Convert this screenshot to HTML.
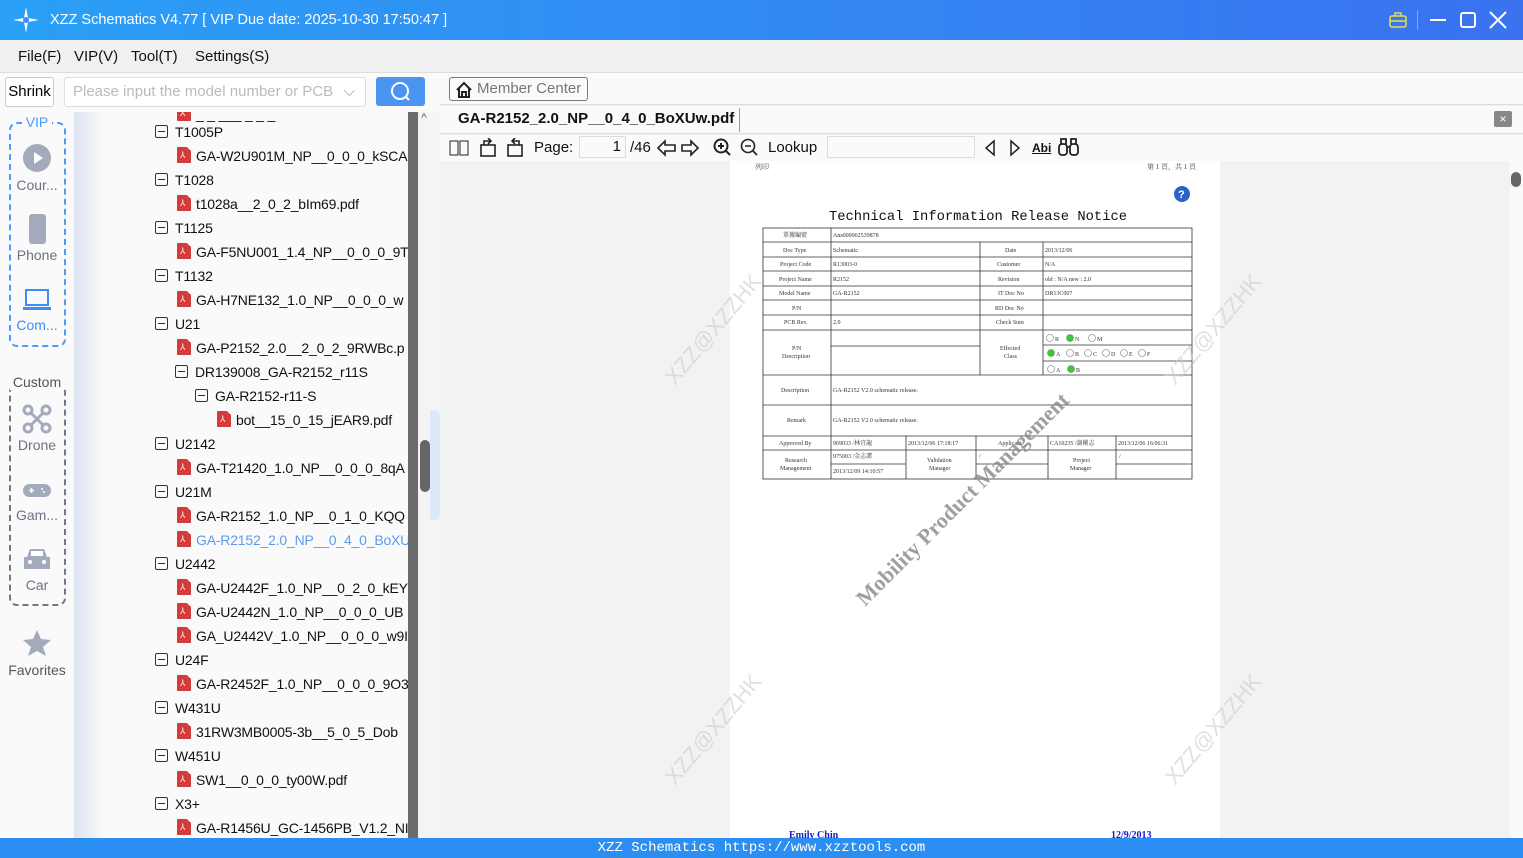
<!DOCTYPE html>
<html><head><meta charset="utf-8"><style>
*{margin:0;padding:0;box-sizing:border-box}
body{width:1523px;height:858px;overflow:hidden;position:relative;font-family:"Liberation Sans","Noto Sans CJK SC",sans-serif;background:#f0f0f0}
.a{position:absolute}
#title{left:0;top:0;width:1523px;height:40px;background:linear-gradient(90deg,#2aa0f6,#3a72f0);color:#fff;font-size:14.5px}
#menu{left:0;top:40px;width:1523px;height:32px;background:#f0f0f0;font-size:15px;color:#111}
#menu span{position:absolute;top:8px}
.tree{left:74px;top:112px;width:334px;height:726px;background:linear-gradient(90deg,#dde4f2 0,#fafafa 30px,#fafafa);overflow:hidden}
.row{position:absolute;font-size:14px;letter-spacing:-0.2px;color:#111;white-space:nowrap;height:24px;line-height:24px}
.mn{display:inline-block;width:13px;height:13px;border:1px solid #333;border-radius:2px;position:relative;vertical-align:-1px;margin-right:7px}
.mn:after{content:"";position:absolute;left:2px;right:2px;top:5px;height:1px;background:#333}
.pdf{display:inline-block;width:14px;height:16px;background:#d33a3a;vertical-align:-2px;margin-right:5px;border-radius:1px;position:relative;clip-path:polygon(0 0,70% 0,100% 25%,100% 100%,0 100%)}
.pdf:after{content:"⅄";position:absolute;color:#fff;font-size:9px;left:3px;top:3px;line-height:10px}
.side{left:0;top:112px;width:74px;height:726px;background:#fafafa}
.sl{position:absolute;width:74px;text-align:center;font-size:14px;color:#6b7280}
.tb{font-size:15px;color:#111}
</style></head><body>
<div class="a" id="title">
 <svg class="a" style="left:12px;top:6px" width="28" height="28" viewBox="0 0 28 28"><path d="M14 1 L16 12 L27 14 L16 16 L14 27 L12 16 L1 14 L12 12Z" fill="#fff"/><circle cx="14" cy="14" r="3" fill="#3a8ef5"/></svg>
 <span class="a" style="left:50px;top:12px">XZZ Schematics V4.77 [ VIP Due date: 2025-10-30 17:50:47 ]</span>
 <svg class="a" style="left:1388px;top:10px" width="20" height="20"><rect x="2" y="6" width="16" height="11" rx="2" fill="none" stroke="#e8e040" stroke-width="1.5"/><path d="M7 6V3h6v3M2 11h16" stroke="#e8e040" stroke-width="1.5" fill="none"/></svg>
 <div class="a" style="left:1417px;top:10px;width:1px;height:20px;background:#6ab0f5"></div>
 <div class="a" style="left:1430px;top:19px;width:16px;height:2px;background:#fff"></div>
 <div class="a" style="left:1460px;top:12px;width:16px;height:16px;border:2px solid #fff;border-radius:3px"></div>
 <svg class="a" style="left:1489px;top:11px" width="18" height="18"><path d="M1 1L17 17M17 1L1 17" stroke="#fff" stroke-width="2"/></svg>
</div>
<div class="a" id="menu"><span style="left:18px">File(F)</span><span style="left:74px">VIP(V)</span><span style="left:131px">Tool(T)</span><span style="left:195px">Settings(S)</span></div>
<div class="a" style="left:0;top:72px;width:1523px;height:1px;background:#ddd"></div>
<div class="a" style="left:0;top:73px;width:440px;height:39px;background:#fafafa"></div>
<div class="a" style="left:5px;top:77px;width:49px;height:30px;border:1px solid #ccc;border-radius:3px;background:#fff;font-size:15px;line-height:28px;text-align:center">Shrink</div>
<div class="a" style="left:64px;top:77px;width:302px;height:30px;border:1px solid #ddd;border-radius:3px;background:#fff;font-size:15px;line-height:28px;color:#bbb;padding-left:8px">Please input the model number or PCB <span style="position:absolute;right:10px;color:#999">⌵</span></div>
<div class="a" style="left:376px;top:77px;width:49px;height:29px;background:#4a94f2;border-radius:3px"><svg width="49" height="29"><circle cx="24" cy="14" r="8" fill="none" stroke="#fff" stroke-width="2"/><path d="M30 20L33 23" stroke="#fff" stroke-width="2"/></svg></div>

<div class="a side">
 <div class="a" style="left:9px;top:10px;width:57px;height:225px;border:2px dashed #4a9cf5;border-radius:8px"></div>
 <div class="sl" style="top:2px;color:#4a9cf5;background:#fafafa;width:30px;left:22px">VIP</div>
 <svg class="a" style="left:23px;top:32px" width="28" height="28"><circle cx="14" cy="14" r="14" fill="#a2aabb"/><path d="M11 8L20 14L11 20Z" fill="#fff"/></svg>
 <div class="sl" style="top:65px">Cour...</div>
 <div class="a" style="left:29px;top:102px;width:17px;height:30px;background:#a2aabb;border-radius:3px"></div>
 <div class="sl" style="top:135px">Phone</div>
 <svg class="a" style="left:22px;top:176px" width="30" height="24"><rect x="4" y="2" width="22" height="15" fill="none" stroke="#3a8ef5" stroke-width="2"/><rect x="1" y="19" width="28" height="3" fill="#3a8ef5"/></svg>
 <div class="sl" style="top:205px;color:#3a8ef5">Com...</div>
 <div class="a" style="left:9px;top:272px;width:57px;height:222px;border:2px dashed #707888;border-radius:8px"></div>
 <div class="sl" style="top:262px;background:#fafafa;width:54px;left:10px;color:#555">Custom</div>
 <svg class="a" style="left:22px;top:292px" width="30" height="30"><g fill="none" stroke="#a2aabb" stroke-width="3"><circle cx="6" cy="6" r="4"/><circle cx="24" cy="6" r="4"/><circle cx="6" cy="24" r="4"/><circle cx="24" cy="24" r="4"/><path d="M8 8L22 22M22 8L8 22"/></g></svg>
 <div class="sl" style="top:325px">Drone</div>
 <svg class="a" style="left:23px;top:372px" width="28" height="13"><rect width="28" height="13" rx="6.5" fill="#a2aabb"/><path d="M6 6.5H11M8.5 4V9" stroke="#fff" stroke-width="1.5"/><circle cx="19" cy="5" r="1" fill="#fff"/><circle cx="21" cy="8" r="1" fill="#fff"/></svg>
 <div class="sl" style="top:395px">Gam...</div>
 <svg class="a" style="left:23px;top:435px" width="28" height="24"><path d="M4 10L7 2H21L24 10H27V22H1V10Z" fill="#a2aabb"/><rect x="8" y="4" width="12" height="5" fill="#fff"/><circle cx="7" cy="15" r="2" fill="#fff"/><circle cx="21" cy="15" r="2" fill="#fff"/></svg>
 <div class="sl" style="top:465px">Car</div>
 <svg class="a" style="left:22px;top:517px" width="30" height="28"><path d="M15 1L19 10L29 11L21 18L24 27L15 22L6 27L9 18L1 11L11 10Z" fill="#a2aabb"/></svg>
 <div class="sl" style="top:550px;color:#555">Favorites</div>
</div>

<div class="a tree">
 <div class="row" style="left:103px;top:-10px"><span class="pdf"></span>_ _ ___ _ _ _</div>
 <div class="row" style="left:81px;top:8px"><span class="mn"></span>T1005P</div>
 <div class="row" style="left:103px;top:32px"><span class="pdf"></span>GA-W2U901M_NP__0_0_0_kSCA</div>
 <div class="row" style="left:81px;top:56px"><span class="mn"></span>T1028</div>
 <div class="row" style="left:103px;top:80px"><span class="pdf"></span>t1028a__2_0_2_bIm69.pdf</div>
 <div class="row" style="left:81px;top:104px"><span class="mn"></span>T1125</div>
 <div class="row" style="left:103px;top:128px"><span class="pdf"></span>GA-F5NU001_1.4_NP__0_0_0_9T</div>
 <div class="row" style="left:81px;top:152px"><span class="mn"></span>T1132</div>
 <div class="row" style="left:103px;top:176px"><span class="pdf"></span>GA-H7NE132_1.0_NP__0_0_0_w</div>
 <div class="row" style="left:81px;top:200px"><span class="mn"></span>U21</div>
 <div class="row" style="left:103px;top:224px"><span class="pdf"></span>GA-P2152_2.0__2_0_2_9RWBc.p</div>
 <div class="row" style="left:101px;top:248px"><span class="mn"></span>DR139008_GA-R2152_r11S</div>
 <div class="row" style="left:121px;top:272px"><span class="mn"></span>GA-R2152-r11-S</div>
 <div class="row" style="left:143px;top:296px"><span class="pdf"></span>bot__15_0_15_jEAR9.pdf</div>
 <div class="row" style="left:81px;top:320px"><span class="mn"></span>U2142</div>
 <div class="row" style="left:103px;top:344px"><span class="pdf"></span>GA-T21420_1.0_NP__0_0_0_8qA</div>
 <div class="row" style="left:81px;top:368px"><span class="mn"></span>U21M</div>
 <div class="row" style="left:103px;top:392px"><span class="pdf"></span>GA-R2152_1.0_NP__0_1_0_KQQ</div>
 <div class="row" style="left:103px;top:416px;color:#5b9cf0"><span class="pdf"></span>GA-R2152_2.0_NP__0_4_0_BoXU</div>
 <div class="row" style="left:81px;top:440px"><span class="mn"></span>U2442</div>
 <div class="row" style="left:103px;top:464px"><span class="pdf"></span>GA-U2442F_1.0_NP__0_2_0_kEY</div>
 <div class="row" style="left:103px;top:488px"><span class="pdf"></span>GA-U2442N_1.0_NP__0_0_0_UB</div>
 <div class="row" style="left:103px;top:512px"><span class="pdf"></span>GA_U2442V_1.0_NP__0_0_0_w9I</div>
 <div class="row" style="left:81px;top:536px"><span class="mn"></span>U24F</div>
 <div class="row" style="left:103px;top:560px"><span class="pdf"></span>GA-R2452F_1.0_NP__0_0_0_9O3</div>
 <div class="row" style="left:81px;top:584px"><span class="mn"></span>W431U</div>
 <div class="row" style="left:103px;top:608px"><span class="pdf"></span>31RW3MB0005-3b__5_0_5_Dob</div>
 <div class="row" style="left:81px;top:632px"><span class="mn"></span>W451U</div>
 <div class="row" style="left:103px;top:656px"><span class="pdf"></span>SW1__0_0_0_ty00W.pdf</div>
 <div class="row" style="left:81px;top:680px"><span class="mn"></span>X3+</div>
 <div class="row" style="left:103px;top:704px"><span class="pdf"></span>GA-R1456U_GC-1456PB_V1.2_NI</div>
</div>
<div class="a" style="left:408px;top:112px;width:10px;height:726px;background:#6b6b6b"></div>
<div class="a" style="left:418px;top:112px;width:12px;height:726px;background:#f4f4f4;font-size:11px;color:#555;text-align:center">^</div>
<div class="a" style="left:430px;top:112px;width:10px;height:726px;background:#f4f4f4"></div>
<div class="a" style="left:430px;top:410px;width:10px;height:110px;background:#dde9f8;border-radius:0 6px 6px 0"></div>
<div class="a" style="left:420px;top:440px;width:10px;height:52px;background:#666;border-radius:5px"></div>

<div class="a" style="left:440px;top:73px;width:1083px;height:32px;background:#fafafa;border-bottom:1px solid #ddd"></div>
<div class="a" style="left:449px;top:77px;width:139px;height:24px;border:1px solid #777;border-radius:3px;font-size:15px;color:#777;line-height:22px;padding-left:27px;background:#fafafa">Member Center<svg class="a" style="left:5px;top:3px" width="18" height="17"><path d="M2 9L9 2L16 9M4 7V16H14V7M7 16V11H11V16" fill="none" stroke="#222" stroke-width="2"/></svg></div>
<div class="a" style="left:440px;top:106px;width:1083px;height:28px;background:#fafafa;border-bottom:1px solid #ddd"></div>
<div class="a" style="left:458px;top:110px;font-size:15px;font-weight:bold;color:#111">GA-R2152_2.0_NP__0_4_0_BoXUw.pdf</div>
<div class="a" style="left:739px;top:108px;width:1px;height:24px;background:#999"></div>
<div class="a" style="left:1494px;top:111px;width:18px;height:16px;background:#888;border-radius:2px;color:#fff;font-size:12px;text-align:center;line-height:16px">×</div>
<div class="a" style="left:440px;top:135px;width:1083px;height:26px;background:#fafafa"></div>
<div class="a tb" style="left:449px;top:138px">
 <svg class="a" style="left:0;top:2px" width="20" height="16"><rect x="1" y="1" width="8" height="14" fill="none" stroke="#222"/><rect x="11" y="1" width="8" height="14" fill="none" stroke="#222"/></svg>
 <svg class="a" style="left:30px;top:0" width="20" height="20"><rect x="2" y="7" width="14" height="11" fill="none" stroke="#222" stroke-width="1.6"/><path d="M5 7V3H12M9 0L12 3L9 6" fill="none" stroke="#222" stroke-width="1.6"/></svg>
 <svg class="a" style="left:57px;top:0" width="20" height="20"><rect x="2" y="7" width="14" height="11" fill="none" stroke="#222" stroke-width="1.6"/><path d="M13 7V3H6M9 0L6 3L9 6" fill="none" stroke="#222" stroke-width="1.6"/></svg>
 <span class="a" style="left:85px;top:1px">Page:</span>
 <div class="a" style="left:130px;top:-2px;width:47px;height:22px;border:1px solid #ddd;background:#fafafa;text-align:right;padding-right:4px;line-height:20px">1</div>
 <span class="a" style="left:181px;top:1px">/46</span>
 <svg class="a" style="left:207px;top:1px" width="44" height="18"><path d="M2 9L9 2V6H19V12H9V16Z" fill="none" stroke="#222" stroke-width="1.6"/><path d="M42 9L35 2V6H26V12H35V16Z" fill="none" stroke="#222" stroke-width="1.6"/></svg>
 <svg class="a" style="left:264px;top:0" width="46" height="20"><circle cx="8" cy="8" r="6.5" fill="none" stroke="#222" stroke-width="2"/><path d="M13 13L17 17M5 8H11M8 5V11" stroke="#222" stroke-width="2"/><circle cx="35" cy="8" r="6.5" fill="none" stroke="#222" stroke-width="1.6"/><path d="M40 13L44 17M32 8H38" stroke="#222" stroke-width="1.6"/></svg>
 <span class="a" style="left:319px;top:1px">Lookup</span>
 <div class="a" style="left:378px;top:-2px;width:148px;height:22px;border:1px solid #ddd;background:#fafafa"></div>
 <svg class="a" style="left:533px;top:1px" width="44" height="18"><path d="M12 2L4 9L12 16Z" fill="none" stroke="#222" stroke-width="1.5"/><path d="M29 2L37 9L29 16Z" fill="none" stroke="#222" stroke-width="1.5"/></svg>
 <span class="a" style="left:583px;top:3px;font-size:12px;font-weight:bold;text-decoration:underline">Abi</span>
 <svg class="a" style="left:609px;top:0" width="22" height="18"><g fill="none" stroke="#222" stroke-width="1.8"><rect x="1" y="6" width="8" height="11" rx="3"/><rect x="12" y="6" width="8" height="11" rx="3"/><path d="M3 6V1H8V6M13 6V1H18V6M9 9H12"/></g></svg>
</div>

<div class="a" style="left:440px;top:161px;width:1070px;height:677px;background:#f2f2f2"></div>
<div class="a" style="left:1510px;top:161px;width:13px;height:677px;background:#fafafa"></div>
<div class="a" style="left:1511px;top:172px;width:10px;height:15px;background:#666;border-radius:5px"></div>
<div class="a" style="left:730px;top:161px;width:490px;height:677px;background:#fff"></div>
<svg class="a" style="left:730px;top:161px;overflow:visible" width="490" height="677" font-family="Liberation Serif,Noto Serif CJK SC,serif">
 <text x="25" y="8" font-size="7" fill="#444">列印</text>
 <text x="417" y="8" font-size="7" fill="#444">第 1 頁，共 1 頁</text>
 <circle cx="452" cy="33" r="8" fill="#2a62c8"/><text x="448" y="37" font-size="11" font-weight="bold" fill="#fff" font-family="Liberation Sans">?</text>
 <text x="248" y="59" font-size="13.8" text-anchor="middle" font-family="Liberation Mono,monospace" fill="#111">Technical Information Release Notice</text>
 <g stroke="#333" stroke-width="0.8" fill="none">
  <rect x="33" y="67" width="429" height="251"/>
  <path d="M33 81H462M33 96H462M33 110H462M33 125H462M33 139H462M33 154H462M33 169H462M33 214H462M33 244H462M33 275H462M33 289H462"/>
  <path d="M101 67V318M250 81V214M313 81V214M176 275V318M246 275V318M318 275V318M386 275V318"/>
  <path d="M101 185H250M313 184H462M313 200H462M101 303H176M246 303H318M386 303H462"/>
 </g>
 <g font-size="6" fill="#333">
  <text x="53" y="76">單據編號</text><text x="103" y="76">Ans000002539878</text>
  <text x="53" y="91">Doc Type</text><text x="103" y="91">Schematic</text><text x="275" y="91">Date</text><text x="315" y="91">2013/12/06</text>
  <text x="50" y="105">Project Code</text><text x="103" y="105">R13003-0</text><text x="267" y="105">Customer</text><text x="315" y="105">N/A</text>
  <text x="49" y="120">Project Name</text><text x="103" y="120">R2152</text><text x="268" y="120">Revision</text><text x="315" y="120">old : N/A  new : 2.0</text>
  <text x="49" y="134">Model Name</text><text x="103" y="134">GA-R2152</text><text x="268" y="134">IT Doc No</text><text x="315" y="134">DR13C007</text>
  <text x="62" y="149">P/N</text><text x="265" y="149">RD Doc No</text>
  <text x="54" y="163">PCB Rev.</text><text x="103" y="163">2.0</text><text x="266" y="163">Check Sum</text>
  <text x="62" y="189">P/N</text><text x="52" y="197">Description</text><text x="270" y="189">Effected</text><text x="274" y="197">Class</text>
  <text x="325" y="180">R</text><text x="345" y="180">N</text><text x="367" y="180">M</text>
  <text x="326" y="195">A</text><text x="345" y="195">B</text><text x="363" y="195">C</text><text x="381" y="195">D</text><text x="399" y="195">E</text><text x="417" y="195">F</text>
  <text x="326" y="211">A</text><text x="346" y="211">B</text>
  <text x="51" y="231">Description</text><text x="103" y="231">GA-R2152 V2.0 schematic release.</text>
  <text x="57" y="261">Remark</text><text x="103" y="261">GA-R2152 V2.0 schematic release.</text>
  <text x="49" y="284">Approved By</text><text x="103" y="284">969033 /林宜龍</text><text x="178" y="284">2013/12/06 17:18:17</text><text x="268" y="284">Applicant</text><text x="320" y="284">CA10235 /謝剛志</text><text x="388" y="284">2013/12/06 16:06:31</text>
  <text x="55" y="301">Research</text><text x="50" y="309">Management</text><text x="103" y="297">975003 /金志潔</text><text x="103" y="312">2013/12/09 14:10:57</text>
  <text x="197" y="301">Validation</text><text x="199" y="309">Manager</text><text x="249" y="297">/</text>
  <text x="343" y="301">Project</text><text x="340" y="309">Manager</text><text x="389" y="297">/</text>
 </g>
 <g stroke="#777" stroke-width="0.6" fill="#fff">
  <circle cx="320" cy="177" r="3.5"/><circle cx="340" cy="177" r="3.5" fill="#3c3"/><circle cx="362" cy="177" r="3.5"/>
  <circle cx="321" cy="192" r="3.5" fill="#3c3"/><circle cx="340" cy="192" r="3.5"/><circle cx="358" cy="192" r="3.5"/><circle cx="376" cy="192" r="3.5"/><circle cx="394" cy="192" r="3.5"/><circle cx="412" cy="192" r="3.5"/>
  <circle cx="321" cy="208" r="3.5"/><circle cx="341" cy="208" r="3.5" fill="#3c3"/>
 </g>
 <text x="0" y="0" transform="translate(135,446) rotate(-45)" font-size="22" font-weight="bold" fill="#888" opacity="0.8">Mobility Product Management</text>
 <g font-family="Liberation Sans" font-size="22" fill="#ccc" opacity="0.6">
  <text transform="translate(-55,225) rotate(-50)">XZZ@XZZHK</text>
  <text transform="translate(445,225) rotate(-50)">XZZ@XZZHK</text>
  <text transform="translate(-55,625) rotate(-50)">XZZ@XZZHK</text>
  <text transform="translate(445,625) rotate(-50)">XZZ@XZZHK</text>
 </g>
 <text x="59" y="677" font-size="10" font-weight="bold" fill="#1a1acc">Emily Chin</text>
 <text x="381" y="677" font-size="10" font-weight="bold" fill="#1a1acc">12/9/2013</text>
</svg>
<div class="a" style="left:0;top:838px;width:1523px;height:20px;background:#2a8ef2;color:#fff;font-family:'Liberation Mono',monospace;font-size:14px;text-align:center;line-height:20px">XZZ Schematics https://www.xzztools.com</div>
</body></html>
